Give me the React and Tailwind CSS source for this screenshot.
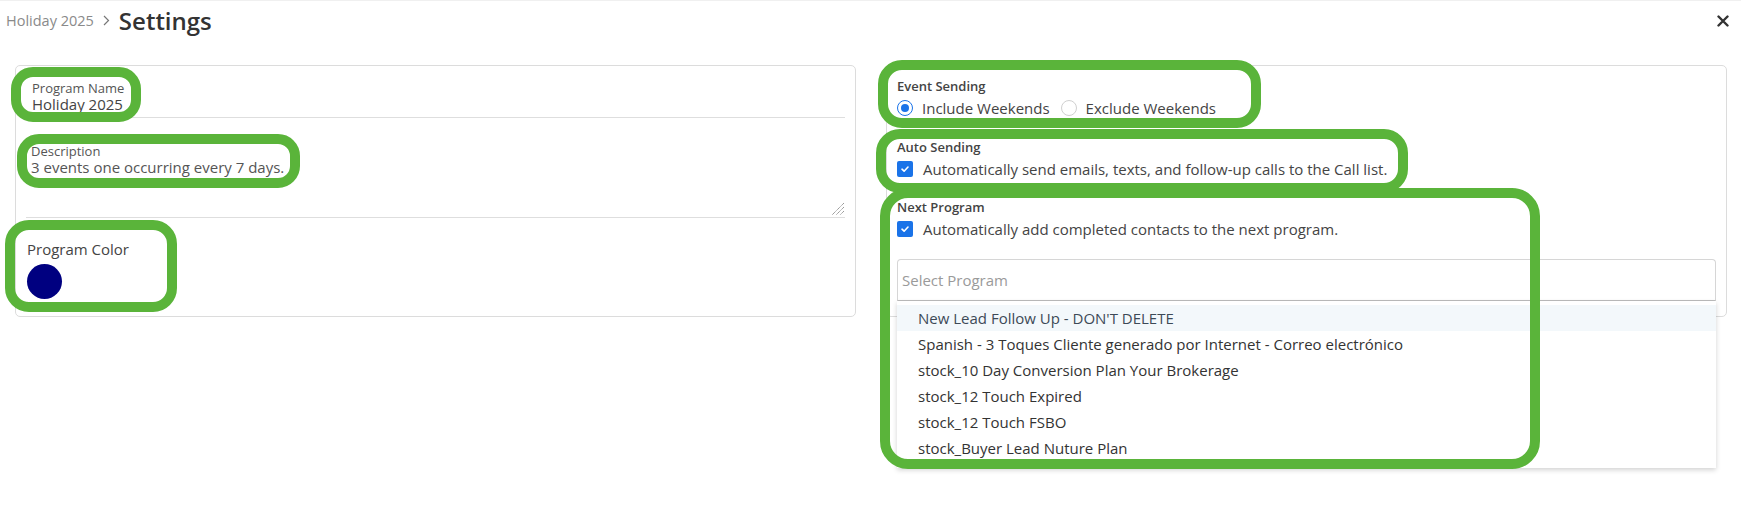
import React, { useState } from 'react';

const programs = [
  "New Lead Follow Up - DON'T DELETE",
  'Spanish - 3 Toques Cliente generado por Internet - Correo electrónico',
  'stock_10 Day Conversion Plan Your Brokerage',
  'stock_12 Touch Expired',
  'stock_12 Touch FSBO',
  'stock_Buyer Lead Nuture Plan',
];

function Radio({ checked, label }) {
  return (
    <label className="flex items-center gap-[9px] h-[20px]">
      <span
        className={`flex items-center justify-center size-[16px] rounded-full border ${
          checked ? 'border-[#1a73e8]' : 'border-[#d0d0d0]'
        }`}
      >
        {checked && <span className="size-[8px] rounded-full bg-[#1a73e8]" />}
      </span>
      <span className="text-[15px] text-[#444]">{label}</span>
    </label>
  );
}

function Check({ label }) {
  return (
    <label className="flex items-center gap-[10px] h-[20px]">
      <span className="flex items-center justify-center size-[16px] rounded-[2px] bg-[#1a73e8]">
        <svg width="10" height="10" viewBox="0 0 10 10">
          <path d="M2 5.2 4.1 7.2 8 3" fill="none" stroke="#fff" strokeWidth="1.6" strokeLinecap="round" strokeLinejoin="round" />
        </svg>
      </span>
      <span className="text-[15px] text-[#444]">{label}</span>
    </label>
  );
}

function Highlight({ className }) {
  return (
    <div
      className={`absolute z-20 pointer-events-none border-[10px] border-[#5ab43a] ${className}`}
    />
  );
}

export default function App() {
  const [hovered] = useState(0);

  return (
    <div className="relative w-[1741px] h-[512px] bg-white font-['Open_Sans',sans-serif] text-[#444] overflow-hidden">
      {/* title bar */}
      <div className="flex items-center justify-between h-[40px] pl-[6px] pr-[12px] border-t border-[#f0f0f0]">
        <div className="flex items-center">
          <span className="text-[14.5px] text-[#8a8a8a]">Holiday 2025</span>
          <svg className="mx-[9px]" width="7" height="11" viewBox="0 0 7 11">
            <path d="M1 1l4.5 4.5L1 10" fill="none" stroke="#777" strokeWidth="1.2" />
          </svg>
          <span className="text-[24px] font-semibold text-[#333]">Settings</span>
        </div>
        <svg width="12" height="12" viewBox="0 0 12 12">
          <path d="M1.5 1.5l9 9M10.5 1.5l-9 9" stroke="#333" strokeWidth="2.4" strokeLinecap="round" />
        </svg>
      </div>

      <div className="grid grid-cols-2 gap-[30px] pl-[15px] pr-[14px] pt-[25px]">
        {/* general */}
        <div className="h-[252px] border border-[#dcdcdc] rounded-[5px] px-[10px] pt-[15px]">
          <div className="border-b border-[#dedede] pl-[6px] pb-[4px]">
            <div className="text-[13px] leading-[14px] text-[#555]">Program Name</div>
            <div className="text-[15px] leading-[18px] text-[#444]">Holiday 2025</div>
          </div>
          <div className="flex flex-col h-[100px] border-b border-[#dedede] pl-[5px] pt-[26px]">
            <div className="text-[13px] leading-[14px] text-[#555]">Description</div>
            <div className="text-[15px] leading-[18px] text-[#555]">3 events one occurring every 7 days.</div>
            <div className="flex-1" />
            <div className="flex justify-end pb-[1px]">
              <svg width="14" height="14" viewBox="0 0 14 14">
                <path d="M13 1 1 13M13 5 5 13M13 9 9 13" stroke="#888" strokeWidth="1" strokeDasharray="1.2 0.6" />
              </svg>
            </div>
          </div>
          <div className="pl-[1px] pt-[22px]">
            <div className="text-[15px] leading-[18px] text-[#444]">Program Color</div>
            <div className="mt-[6px] size-[35px] rounded-full bg-[#000080]" />
          </div>
        </div>

        {/* sending */}
        <div className="h-[252px] border border-[#dcdcdc] rounded-[5px] px-[10px] pt-[12px]">
          <div className="text-[13px] leading-[16px] font-semibold text-[#444]">Event Sending</div>
          <div className="flex items-center gap-[11px] mt-[4px]">
            <Radio checked label="Include Weekends" />
            <Radio label="Exclude Weekends" />
          </div>

          <div className="mt-[21px] text-[13px] leading-[16px] font-semibold text-[#444]">Auto Sending</div>
          <div className="mt-[4px]">
            <Check label="Automatically send emails, texts, and follow-up calls to the Call list." />
          </div>

          <div className="mt-[20px] text-[13px] leading-[16px] font-semibold text-[#444]">Next Program</div>
          <div className="mt-[4px]">
            <Check label="Automatically add completed contacts to the next program." />
          </div>

          <div className="relative mt-[20px]">
            <div className="flex items-center h-[42px] border border-[#d6d6d6] border-b-[#bdbdbd] rounded-t-[4px] pl-[4px] text-[15px] text-[#9a9a9a]">
              Select Program
            </div>
            <div className="absolute left-0 right-0 top-full z-10 h-[167px] overflow-hidden bg-white pt-[4px] shadow-[0_2px_5px_rgba(0,0,0,0.18)]">
              {programs.map((p, i) => (
                <div
                  key={p}
                  className={`flex items-center h-[26px] pl-[21px] text-[15px] ${
                    i === hovered ? 'bg-[#f3f8fb] text-[#3d4a57]' : 'text-[#333]'
                  }`}
                >
                  {p}
                </div>
              ))}
            </div>
          </div>
        </div>
      </div>

      <Highlight className="left-[11px] top-[67px] w-[130px] h-[55px] rounded-[22px]" />
      <Highlight className="left-[17px] top-[134px] w-[283px] h-[54px] rounded-[22px]" />
      <Highlight className="left-[5px] top-[220px] w-[172px] h-[92px] rounded-[24px]" />
      <Highlight className="left-[878px] top-[60px] w-[383px] h-[68px] rounded-[24px]" />
      <Highlight className="left-[876px] top-[129px] w-[532px] h-[64px] rounded-[24px]" />
      <Highlight className="left-[880px] top-[188px] w-[660px] h-[281px] rounded-[28px]" />
    </div>
  );
}
